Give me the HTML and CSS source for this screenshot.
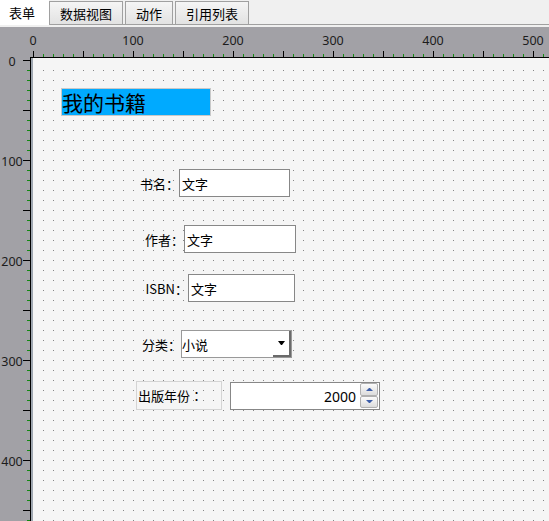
FILE: index.html
```html
<!DOCTYPE html>
<html lang="zh-CN">
<head>
<meta charset="utf-8">
<title>表单设计</title>
<link rel="stylesheet" href="styles.css">
</head>
<body>
<div class="tabbar">
  <div class="tab tab-active">表单</div>
  <div class="tab">数据视图</div>
  <div class="tab">动作</div>
  <div class="tab">引用列表</div>
</div>
<div class="workspace">
  <div class="corner"></div>
  <div class="hruler">
    <div class="hlabels">
      <span class="hnum">0</span>
      <span class="hnum">100</span>
      <span class="hnum">200</span>
      <span class="hnum">300</span>
      <span class="hnum">400</span>
      <span class="hnum">500</span>
    </div>
  </div>
  <div class="vruler">
    <div class="vlabels">
      <span class="vnum">0</span>
      <span class="vnum">100</span>
      <span class="vnum">200</span>
      <span class="vnum">300</span>
      <span class="vnum">400</span>
    </div>
  </div>
  <div class="canvas">
    <div class="widget title">我的书籍</div>

    <div class="widget field-row row-name">
      <span class="lbl">书名<span class="colon">：</span></span>
      <div class="input">文字</div>
    </div>

    <div class="widget field-row row-author">
      <span class="lbl">作者<span class="colon">：</span></span>
      <div class="input input-author">文字</div>
    </div>

    <div class="widget field-row row-isbn">
      <span class="lbl lbl-wide">ISBN<span class="colon">：</span></span>
      <div class="input input-isbn">文字</div>
    </div>

    <div class="widget field-row row-cat">
      <span class="lbl">分类<span class="colon">：</span></span>
      <div class="combo">
        <span class="combo-text">小说</span>
        <span class="combo-btn"><span class="caret"></span></span>
      </div>
    </div>

    <div class="widget year-label">出版年份<span class="colon">：</span></div>

    <div class="widget spin">
      <span class="spin-val">2000</span>
      <span class="spin-btns">
        <span class="spin-btn"><span class="arrow-up"></span></span>
        <span class="spin-btn"><span class="arrow-down"></span></span>
      </span>
    </div>
  </div>
</div>
</body>
</html>
```

FILE: styles.css
```css
* { box-sizing: border-box; }

html, body {
  margin: 0;
  padding: 0;
  overflow: hidden;
}

body {
  width: 549px;
  height: 521px;
  background: #f0f0f0;
  font-family: "Noto Sans CJK SC", "Noto Sans", sans-serif;
  font-size: 13px;
  color: #000;
  display: flex;
  flex-direction: column;
}

/* ---------- tabs ---------- */
.tabbar {
  flex: none;
  display: flex;
  align-items: flex-end;
  height: 25px;
  border-bottom: 1px solid #a0a0a0;
  background: #f0f0f0;
}

.tab {
  height: 23px;
  padding: 0 10px;
  margin-left: 2px;
  border: 1px solid #a0a0a0;
  border-bottom: none;
  background: linear-gradient(#f5f5f5, #e2e2e2);
  display: flex;
  align-items: center;
  line-height: 1;
  white-space: nowrap;
}

.tab-active {
  height: 25px;
  width: 49px;
  margin: 0 0 -1px 0;
  padding: 0 0 0 9px;
  border: none;
  background: #fff;
}

.tab-active + .tab { margin-left: 0; }

/* ---------- workspace ---------- */
.workspace {
  flex: 1;
  margin-top: 2px;
  display: grid;
  grid-template-columns: 30px 1fr;
  grid-template-rows: 31px 1fr;
  background: #a2a1a6;
  overflow: hidden;
  font-family: "Noto Sans", sans-serif;
}

.hruler {
  border-bottom: 1px solid #000;
  background-image:
    linear-gradient(to right, #000 1px, transparent 1px),
    linear-gradient(to right, #118a11 1px, transparent 1px);
  background-size: 50px 6px, 10px 3px;
  background-repeat: repeat-x;
  background-position: 3px 100%, 3px 100%;
}

.hlabels {
  display: flex;
  margin-left: -47px;
  padding-top: 5px;
}

.hnum {
  flex: none;
  width: 100px;
  text-align: center;
  font-size: 12.5px;
  line-height: 17px;
  color: #1c1c1c;
}

.vruler {
  background-image:
    linear-gradient(#000 1px, transparent 1px),
    linear-gradient(#118a11 1px, transparent 1px);
  background-size: 7px 50px, 3px 10px;
  background-repeat: repeat-y;
  background-position: 100% 2px, 100% 2px;
}

.vlabels {
  display: flex;
  flex-direction: column;
  margin-top: -47px;
  width: 24px;
}

.vnum {
  flex: none;
  height: 100px;
  display: flex;
  align-items: center;
  justify-content: center;
  font-size: 12.5px;
  line-height: 17px;
  color: #1c1c1c;
}

/* ---------- design canvas ---------- */
.canvas {
  position: relative;
  border-left: 1px solid #000;
  background-color: #f5f5f5;
  background-image:
    linear-gradient(to right, transparent 1px, #f5f5f5 1px),
    linear-gradient(#858585 1px, #f5f5f5 1px);
  background-size: 10px 10px;
  background-position: 2px 2px;
  box-shadow: inset 2px 0 #9ea6b0, inset 3px 3px #f5f5f5;
  font-family: "Noto Sans CJK SC", "Noto Sans", sans-serif;
  font-size: 13px;
}

.widget { position: absolute; }

.colon { font-family: "Noto Sans CJK TC", "Noto Sans CJK SC", sans-serif; }

.title {
  left: 30px;
  top: 30px;
  width: 150px;
  height: 28px;
  border: 1px solid #c8c8c8;
  background: #00aaff;
  font-size: 21px;
  line-height: 26px;
  white-space: nowrap;
}

.field-row {
  display: flex;
  align-items: center;
}

.row-name   { left: 109px; top: 111px; }
.row-author { left: 114px; top: 167px; }
.row-isbn   { left: 113px; top: 216px; }
.row-cat    { left: 111px; top: 272px; }

.lbl {
  width: 39px;
  text-align: right;
  white-space: nowrap;
}

.lbl-wide { width: 44px; }

.input {
  width: 111px;
  height: 28px;
  border: 1px solid #878787;
  background: #fff;
  padding-left: 2px;
  display: flex;
  align-items: center;
}

.input-author { width: 112px; }
.input-isbn { width: 107px; }

.combo {
  width: 111px;
  height: 28px;
  border: 1px solid #999;
  background: #fff;
  display: flex;
}

.combo-text {
  flex: 1;
  display: flex;
  align-items: center;
}

.combo-btn {
  width: 18px;
  border-right: 2px solid #6a6a6a;
  border-bottom: 2px solid #6a6a6a;
  display: flex;
  align-items: center;
  justify-content: center;
}

.caret {
  box-sizing: content-box;
  width: 1px;
  height: 0;
  border-top: 4px solid #000;
  border-left: 3px solid transparent;
  border-right: 3px solid transparent;
}

.year-label {
  left: 105px;
  top: 323px;
  width: 86px;
  height: 29px;
  border: 1px solid #d4d4d4;
  padding-left: 1px;
  display: flex;
  align-items: center;
  white-space: nowrap;
}

.spin {
  left: 199px;
  top: 324px;
  width: 150px;
  height: 28px;
  border: 1px solid #878787;
  background: #fff;
  display: flex;
}

.spin-val {
  flex: 1;
  align-self: center;
  text-align: right;
  padding-right: 4px;
  font-family: "Noto Sans", sans-serif;
  font-size: 14px;
  line-height: 18px;
  padding-top: 2px;
}

.spin-btns {
  width: 19px;
  padding: 0 1px 1px 0;
  display: flex;
  flex-direction: column;
}

.spin-btn {
  flex: 1;
  border: 1px solid #b0b0b0;
  border-radius: 2px;
  background: linear-gradient(#fbfbfb, #dcdcdc);
  display: flex;
  align-items: center;
  justify-content: center;
}

.arrow-up,
.arrow-down {
  box-sizing: content-box;
  width: 1px;
  height: 0;
  border-left: 3px solid transparent;
  border-right: 3px solid transparent;
}

.arrow-up { border-bottom: 3px solid #3c5da8; }
.arrow-down { border-top: 3px solid #3c5da8; }
```
